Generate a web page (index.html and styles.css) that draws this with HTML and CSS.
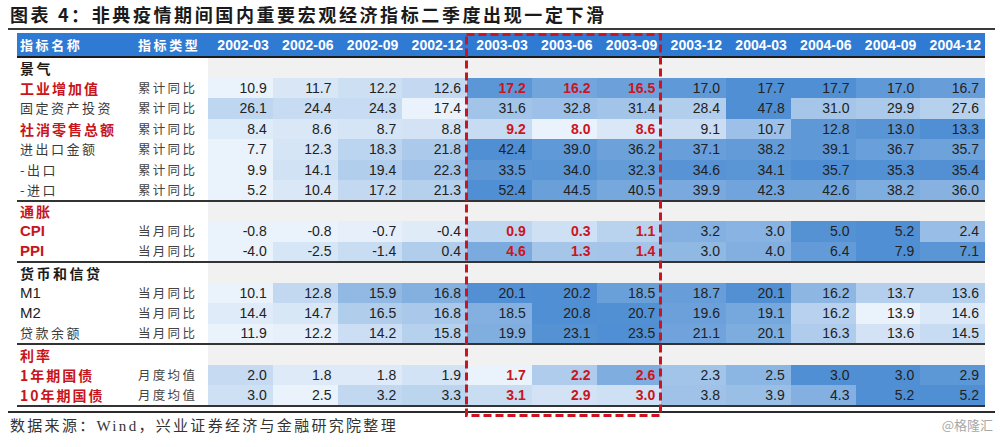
FILE: index.html
```html
<!DOCTYPE html>
<html lang="zh">
<head>
<meta charset="utf-8">
<title>非典疫情期间国内重要宏观经济指标</title>
<link rel="stylesheet" href="styles.css">
</head>
<body>
<div class="page">
  <h1 class="title">图表 4：非典疫情期间国内重要宏观经济指标二季度出现一定下滑</h1>
  <div class="table-wrap">
    <table class="heat">
      <colgroup>
        <col class="w-name"><col class="w-type">
        <col class="w-d"><col class="w-d"><col class="w-d"><col class="w-d">
        <col class="w-d"><col class="w-d"><col class="w-d"><col class="w-d">
        <col class="w-d"><col class="w-d"><col class="w-d"><col class="w-d">
      </colgroup>
      <thead>
        <tr>
          <th class="h-name">指标名称</th><th class="h-type">指标类型</th>
          <th>2002-03</th><th>2002-06</th><th>2002-09</th><th>2002-12</th>
          <th>2003-03</th><th>2003-06</th><th>2003-09</th>
          <th>2003-12</th><th>2004-03</th><th>2004-06</th><th>2004-09</th><th>2004-12</th>
        </tr>
      </thead>
      <tbody>
        <tr class="sec-head"><td class="name bold">景气</td><td></td><td class="gray" colspan="12"></td></tr>
        <tr class="data hl"><td class="name red">工业增加值</td><td class="type">累计同比</td><td>10.9</td><td>11.7</td><td>12.2</td><td>12.6</td><td>17.2</td><td>16.2</td><td>16.5</td><td>17.0</td><td>17.7</td><td>17.7</td><td>17.0</td><td>16.7</td></tr>
        <tr class="data"><td class="name">固定资产投资</td><td class="type">累计同比</td><td>26.1</td><td>24.4</td><td>24.3</td><td>17.4</td><td>31.6</td><td>32.8</td><td>31.4</td><td>28.4</td><td>47.8</td><td>31.0</td><td>29.9</td><td>27.6</td></tr>
        <tr class="data hl"><td class="name red">社消零售总额</td><td class="type">累计同比</td><td>8.4</td><td>8.6</td><td>8.7</td><td>8.8</td><td>9.2</td><td>8.0</td><td>8.6</td><td>9.1</td><td>10.7</td><td>12.8</td><td>13.0</td><td>13.3</td></tr>
        <tr class="data"><td class="name">进出口金额</td><td class="type">累计同比</td><td>7.7</td><td>12.3</td><td>18.3</td><td>21.8</td><td>42.4</td><td>39.0</td><td>36.2</td><td>37.1</td><td>38.2</td><td>39.1</td><td>36.7</td><td>35.7</td></tr>
        <tr class="data"><td class="name">-出口</td><td class="type">累计同比</td><td>9.9</td><td>14.1</td><td>19.4</td><td>22.3</td><td>33.5</td><td>34.0</td><td>32.3</td><td>34.6</td><td>34.1</td><td>35.7</td><td>35.3</td><td>35.4</td></tr>
        <tr class="data"><td class="name">-进口</td><td class="type">累计同比</td><td>5.2</td><td>10.4</td><td>17.2</td><td>21.3</td><td>52.4</td><td>44.5</td><td>40.5</td><td>39.9</td><td>42.3</td><td>42.6</td><td>38.2</td><td>36.0</td></tr>
      </tbody>
      <tbody>
        <tr class="sec-head"><td class="name red">通胀</td><td></td><td class="gray" colspan="12"></td></tr>
        <tr class="data hl"><td class="name red latin">CPI</td><td class="type">当月同比</td><td>-0.8</td><td>-0.8</td><td>-0.7</td><td>-0.4</td><td>0.9</td><td>0.3</td><td>1.1</td><td>3.2</td><td>3.0</td><td>5.0</td><td>5.2</td><td>2.4</td></tr>
        <tr class="data hl"><td class="name red latin">PPI</td><td class="type">当月同比</td><td>-4.0</td><td>-2.5</td><td>-1.4</td><td>0.4</td><td>4.6</td><td>1.3</td><td>1.4</td><td>3.0</td><td>4.0</td><td>6.4</td><td>7.9</td><td>7.1</td></tr>
      </tbody>
      <tbody>
        <tr class="sec-head"><td class="name bold">货币和信贷</td><td></td><td class="gray" colspan="12"></td></tr>
        <tr class="data"><td class="name latin-n">M1</td><td class="type">当月同比</td><td>10.1</td><td>12.8</td><td>15.9</td><td>16.8</td><td>20.1</td><td>20.2</td><td>18.5</td><td>18.7</td><td>20.1</td><td>16.2</td><td>13.7</td><td>13.6</td></tr>
        <tr class="data"><td class="name latin-n">M2</td><td class="type">当月同比</td><td>14.4</td><td>14.7</td><td>16.5</td><td>16.8</td><td>18.5</td><td>20.8</td><td>20.7</td><td>19.6</td><td>19.1</td><td>16.2</td><td>13.9</td><td>14.6</td></tr>
        <tr class="data"><td class="name">贷款余额</td><td class="type">当月同比</td><td>11.9</td><td>12.2</td><td>14.2</td><td>15.8</td><td>19.9</td><td>23.1</td><td>23.5</td><td>21.1</td><td>20.1</td><td>16.3</td><td>13.6</td><td>14.5</td></tr>
      </tbody>
      <tbody>
        <tr class="sec-head"><td class="name red">利率</td><td></td><td class="gray" colspan="12"></td></tr>
        <tr class="data hl"><td class="name red">1年期国债</td><td class="type">月度均值</td><td>2.0</td><td>1.8</td><td>1.8</td><td>1.9</td><td>1.7</td><td>2.2</td><td>2.6</td><td>2.3</td><td>2.5</td><td>3.0</td><td>3.0</td><td>2.9</td></tr>
        <tr class="data hl"><td class="name red">10年期国债</td><td class="type">月度均值</td><td>3.0</td><td>2.5</td><td>3.2</td><td>3.3</td><td>3.1</td><td>2.9</td><td>3.0</td><td>3.8</td><td>3.9</td><td>4.3</td><td>5.2</td><td>5.2</td></tr>
      </tbody>
    </table>
    <svg class="focus-box" width="197" height="384" viewBox="0 0 197 384" aria-hidden="true">
      <rect x="1.5" y="1.5" width="194" height="381" fill="none" stroke="#cc1420" stroke-width="3" stroke-dasharray="8 4"/>
    </svg>
  </div>
  <div class="foot">
    <span class="source">数据来源：Wind，兴业证券经济与金融研究院整理</span>
    <span class="mark">@格隆汇</span>
  </div>
</div>
<script src="script.js"></script>
</body>
</html>
```

FILE: styles.css
```css
* { box-sizing: border-box; }
html, body { margin: 0; padding: 0; background: #fff; }
body {
  font-family: "Liberation Sans", "Noto Sans CJK SC", sans-serif;
  color: #222;
  width: 1000px;
  height: 447px;
  overflow: hidden;
}
.page { padding: 0 5px 0 8px; }
.title {
  margin: 0;
  height: 30px;
  padding: 3px 0 0 2px;
  font-family: "Noto Sans CJK SC", sans-serif;
  font-size: 18px;
  line-height: 22px;
  font-weight: 700;
  letter-spacing: 2.6px;
  color: #1a1a1a;
  border-bottom: 2px solid #3a3a3a;
}
.table-wrap {
  position: relative;
  margin: 3px 0 0 9px;
  width: 968px;
}
.heat {
  width: 968px;
  table-layout: fixed;
  border-collapse: collapse;
  border-spacing: 0;
}
.w-name { width: 118px; }
.w-type { width: 73px; }
.w-d { width: 64.75px; }
.heat thead th {
  background: #2f7bd4;
  color: #fff;
  height: 24px;
  padding: 0 4px 0 0;
  font-size: 14px;
  font-weight: 700;
  text-align: right;
  border-bottom: 2px solid #1b1b1b;
  white-space: nowrap;
}
.heat thead th.h-name,
.heat thead th.h-type {
  text-align: left;
  padding-left: 3px;
  font-family: "Noto Sans CJK SC", sans-serif;
  font-size: 13px;
  letter-spacing: 2.6px;
}
.heat tbody { border-bottom: 2px solid #333; }
.heat td {
  height: 20.5px;
  padding: 0 6px 0 0;
  font-size: 14px;
  line-height: 18px;
  text-align: right;
  white-space: nowrap;
}
.sec-head td.gray { background: #f1f1f1; }
.heat td.name {
  text-align: left;
  padding-left: 3px;
  font-family: "Noto Sans CJK SC", sans-serif;
  font-size: 13px;
  letter-spacing: 2.5px;
  color: #3a3a3a;
}
.heat td.name.bold { font-weight: 700; color: #1a1a1a; font-size: 14px; }
.heat td.name.red { font-weight: 700; color: #c8141c; font-size: 14px; letter-spacing: 2px; }
.heat td.name.latin {
  font-family: "Liberation Sans", sans-serif;
  font-size: 15px;
  letter-spacing: 0;
}
.heat td.name.latin-n {
  font-family: "Liberation Sans", sans-serif;
  font-size: 15px;
  letter-spacing: 0;
  color: #222;
}
.heat td.type {
  text-align: left;
  padding-left: 3px;
  font-family: "Noto Sans CJK SC", sans-serif;
  font-size: 12.5px;
  letter-spacing: 2.3px;
  color: #444;
}
.heat td.hot {
  color: #cc1420;
  font-weight: 700;
}
.focus-box {
  position: absolute;
  left: 448px;
  top: 0;
}
.foot {
  margin-top: 4px;
  border-top: 2px solid #2a2a2a;
  display: flex;
  justify-content: space-between;
  align-items: center;
  height: 26px;
  padding: 0 2px 0 2px;
}
.source {
  font-family: "Liberation Serif", "Noto Sans CJK SC", serif;
  font-size: 15px;
  letter-spacing: 2.3px;
  color: #333;
}
.mark {
  font-family: "Noto Sans CJK SC", sans-serif;
  font-size: 13px;
  color: #a8a8a8;
}
```

FILE: script.js
```js
(function () {
  var light = [234, 242, 251];
  var dark = [80, 143, 211];
  var rows = document.querySelectorAll('.heat tr.data');
  rows.forEach(function (tr) {
    var cells = Array.prototype.slice.call(tr.querySelectorAll('td')).slice(2);
    var vals = cells.map(function (td) { return parseFloat(td.textContent); });
    var min = Math.min.apply(null, vals);
    var max = Math.max.apply(null, vals);
    cells.forEach(function (td, i) {
      var t = max === min ? 0 : (vals[i] - min) / (max - min);
      var c = light.map(function (l, k) { return Math.round(l + (dark[k] - l) * t); });
      td.style.background = 'rgb(' + c.join(',') + ')';
      if (tr.classList.contains('hl') && i >= 4 && i <= 6) {
        td.classList.add('hot');
      }
    });
  });
})();
```
